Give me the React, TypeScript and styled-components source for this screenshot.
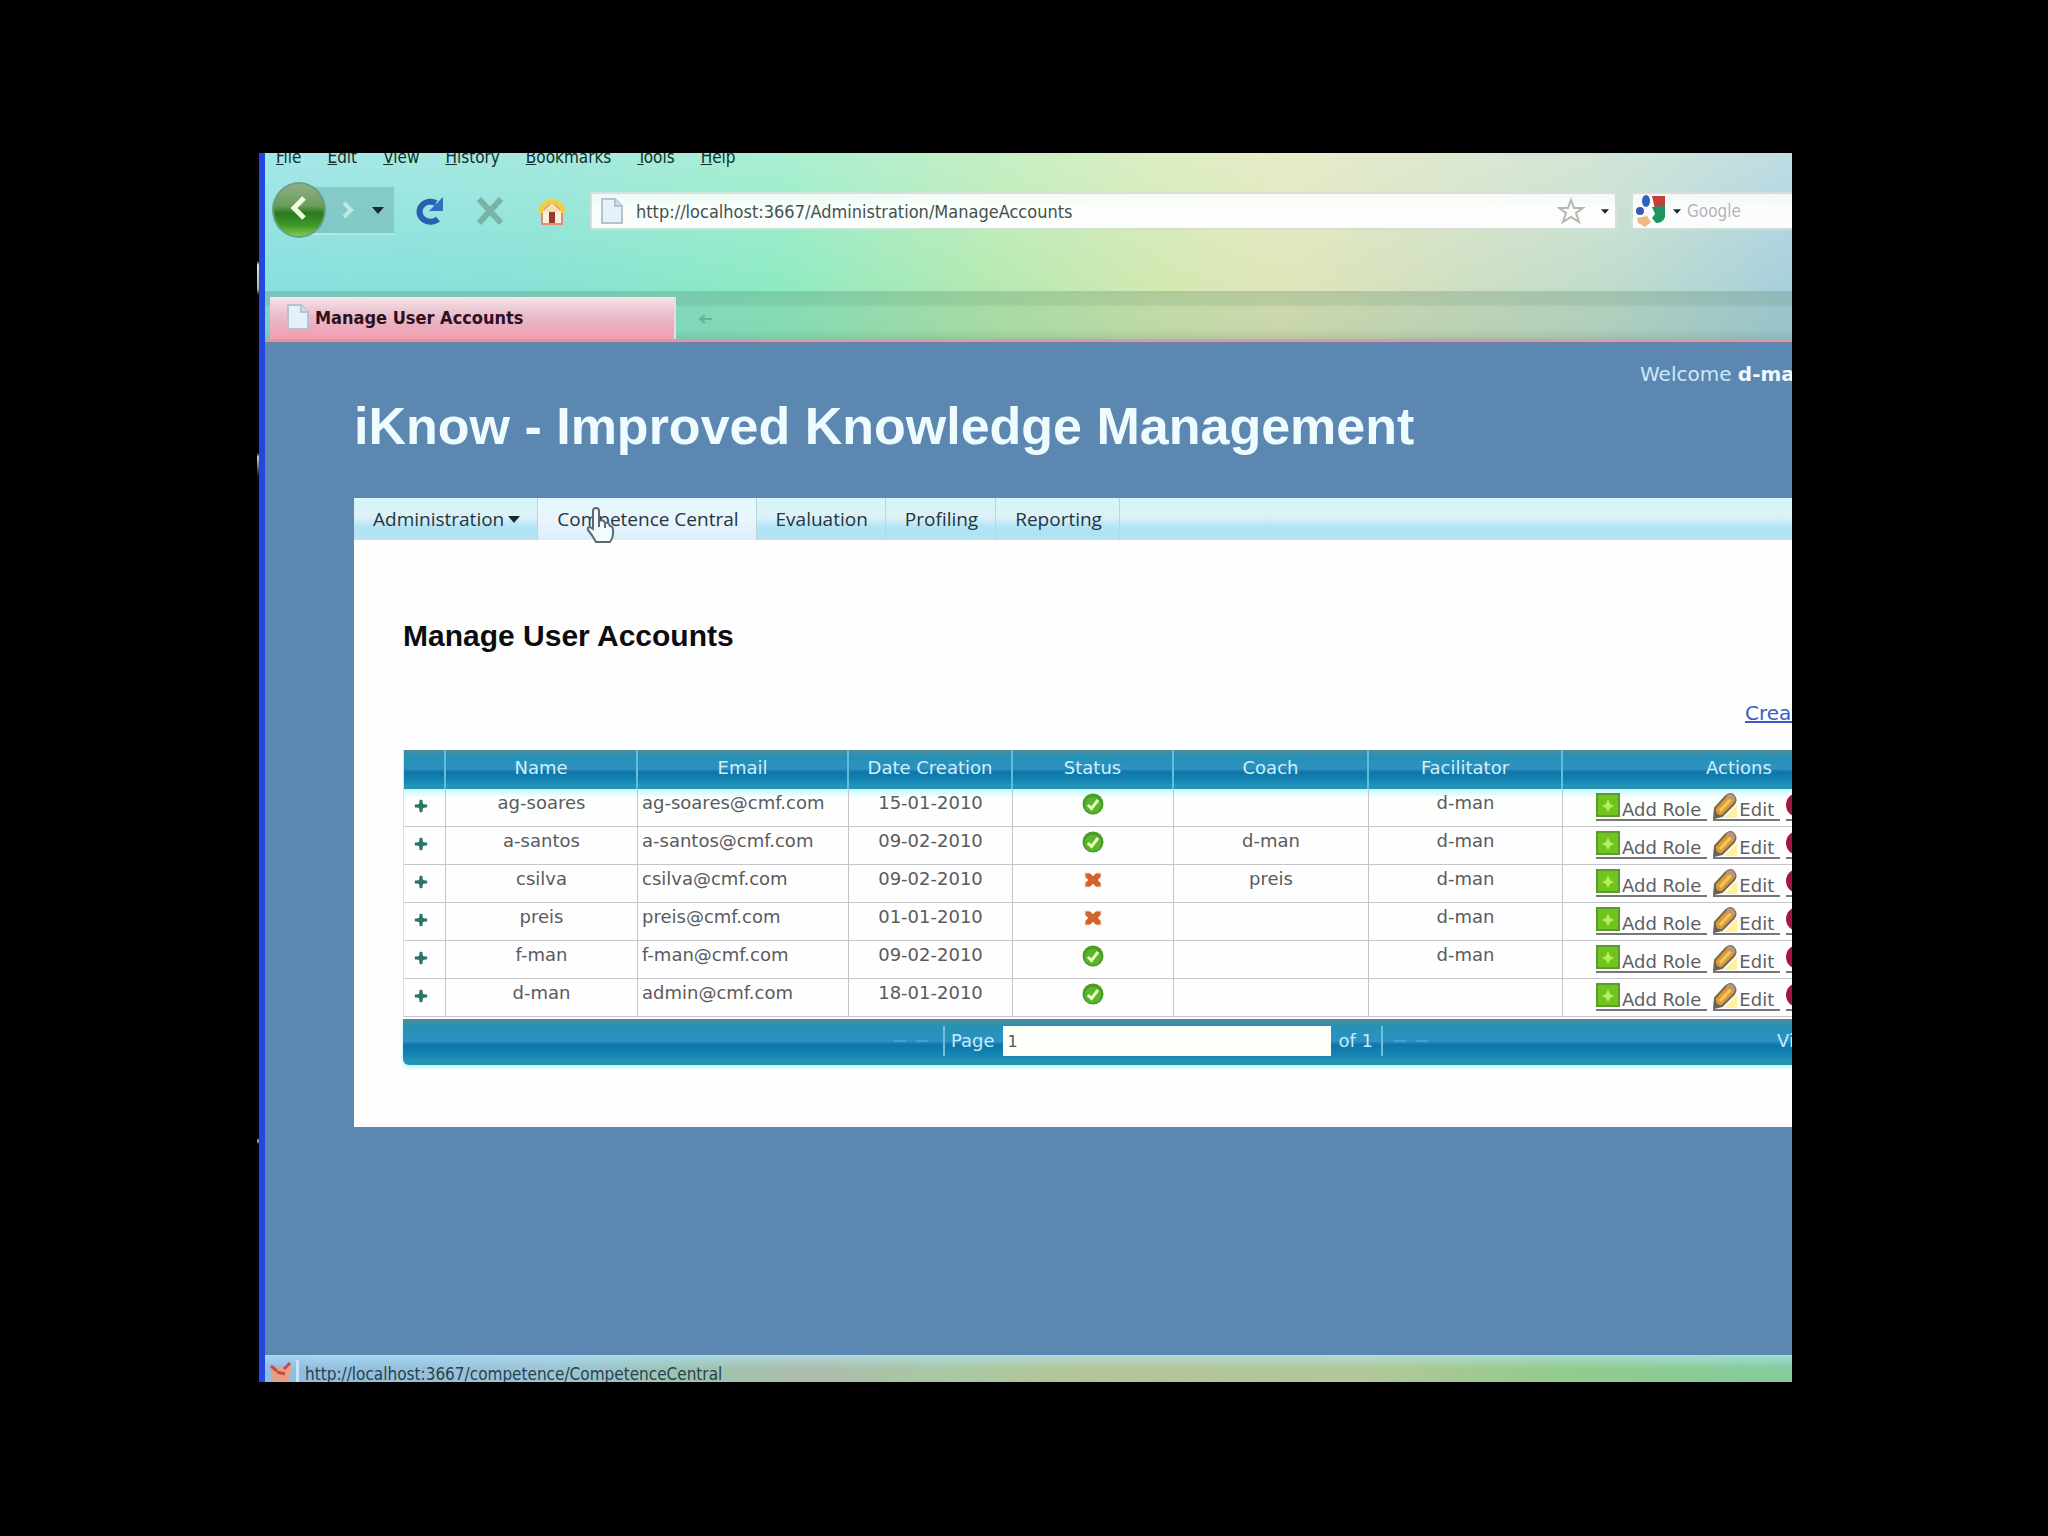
import React from 'react';
import styled, { createGlobalStyle, css } from 'styled-components';

const ui = `"DejaVu Sans Condensed", "DejaVu Sans", sans-serif`;
const verdana = `"DejaVu Sans", sans-serif`;
const arial = `"Liberation Sans", Arial, sans-serif`;
const nav = `"Open Sans", "Noto Sans", sans-serif`;

const blueBar = css`
  background: linear-gradient(
    #54899a 0,
    #2492b4 16%,
    #3090c2 48%,
    #0d76aa 56%,
    #1482b2 76%,
    #2296b8 92%,
    #2a8fae 100%
  );
`;

const GlobalStyle = createGlobalStyle`
  *, *::before, *::after { box-sizing: border-box; }
  body { margin: 0; background: #000; }
  button, input { font: inherit; color: inherit; }
  button { border: 0; padding: 0; background: none; cursor: pointer; }
`;

const Stage = styled.div`
  display: flex;
  min-height: 100vh;
  padding: 153px 256px 154px 257px;
  background: #000;
`;

const Viewport = styled.div`
  display: flex;
  flex: 1;
  min-width: 0;
  overflow: hidden;
`;

const DesktopSliver = styled.div`
  flex: 0 0 2px;
  background: linear-gradient(
    #05030c 108px,
    #d8e8e0 112px,
    #a8b8b0 136px,
    #05030c 142px,
    #05030c 300px,
    #c8d8d0 304px,
    #05030c 324px,
    #05030c 985px,
    #b0c0c0 988px,
    #05030c 991px
  );
`;

const BrowserWindow = styled.div`
  display: flex;
  flex-direction: column;
  flex: 0 0 calc(100% + 261px);
  border-left: 6px solid #2348e0;
  font-family: ${ui};
  font-size: 18px;
  color: #12302a;
`;

const Chrome = styled.header`
  background:
    linear-gradient(rgba(255, 255, 255, 0.26), rgba(255, 255, 255, 0) 75%),
    linear-gradient(
      96deg,
      #86dfe0 0,
      #86e2d4 16%,
      #8ceac2 29%,
      #b6e9b0 41%,
      #d2e8b0 50%,
      #dfe5b8 57%,
      #d2e0c0 65%,
      #c0dccc 75%,
      #a6cfdc 85%,
      #a0c8dc 100%
    );
`;

const MenuBar = styled.nav`
  display: flex;
  gap: 26px;
  height: 38px;
  padding-left: 11px;
  overflow: hidden;
  font-size: 17px;
`;

const MenuItem = styled.button`
  height: 24px;
  margin-top: -8px;
  line-height: 24px;

  &::first-letter {
    text-decoration: underline;
  }
`;

const Toolbar = styled.div`
  display: flex;
  align-items: center;
  height: 40px;
`;

const HistoryButtons = styled.div`
  display: flex;
  align-items: center;
  height: 48px;
  margin: 0 20px 0 34px;
  padding-right: 8px;
  background: rgba(90, 150, 150, 0.34);
  border-bottom: 2px solid rgba(210, 255, 245, 0.6);
`;

const BackButton = styled.button`
  flex: none;
  width: 54px;
  height: 56px;
  margin-left: -27px;
  border-radius: 50%;
  background: linear-gradient(#8fb088 0, #6a9c5c 42%, #2a7a1e 56%, #3f9a2a 80%, #7ccc50 100%);
  border: 2px solid #6aa080;
`;

const IconButton = styled.button<{ $w: number }>`
  display: grid;
  place-items: center;
  flex: none;
  width: ${(p) => p.$w}px;
  height: 36px;
`;

const AddressField = styled.div`
  display: flex;
  align-items: center;
  gap: 12px;
  flex: 1;
  height: 38px;
  margin-left: 22px;
  padding: 0 2px 0 8px;
  background: linear-gradient(rgba(255, 255, 255, 0.8), rgba(255, 255, 255, 0.94) 40%);
  border: 2px solid rgba(130, 160, 140, 0.3);
`;

const SearchField = styled(AddressField)`
  gap: 6px;
  flex: 0 0 424px;
  margin-left: 14px;
  padding: 0 4px 0 2px;
`;

const FieldInput = styled.input<{ $soft?: boolean }>`
  flex: 1;
  min-width: 0;
  border: 0;
  padding: 0;
  outline: 0;
  background: none;
  font-size: ${(p) => (p.$soft ? '17px' : '18px')};
  color: #43524c;

  &::placeholder {
    color: #b4b4bc;
    opacity: 1;
  }
`;

const TabStrip = styled.div`
  display: flex;
  height: 51px;
  margin-top: 60px;
  padding: 6px 0 0 5px;
  border-bottom: 3px solid #d99aa8;
  background: linear-gradient(rgba(70, 120, 90, 0.26) 0, rgba(70, 120, 90, 0.24) 14px, rgba(70, 120, 90, 0.12) 16px, rgba(70, 120, 90, 0.14) 80%, rgba(70, 120, 90, 0.28) 100%);
`;

const Tab = styled.button`
  display: flex;
  align-items: center;
  gap: 5px;
  width: 406px;
  padding: 0 0 2px 16px;
  border-right: 2px solid #f4d8de;
  background: linear-gradient(#f6e6ea 0, #ecc8d2 30%, #eab0c0 65%, #f59cb0 100%);
  font-weight: bold;
  color: #2c0f20;
`;

const NewTab = styled.button`
  width: 60px;
  color: #6fae92;
`;

const Page = styled.main`
  flex: 1;
  padding: 0 89px;
  background: #5b87b0;
  border-top: 2px solid #6f7fa8;
`;

const Banner = styled.div`
  display: flex;
  flex-direction: column;
  padding-top: 16px;
`;

const Welcome = styled.p`
  width: 326px;
  margin: 0;
  align-self: flex-end;
  font: 20px/28px ${verdana};
  color: #cfe8f8;

  b {
    color: #eef9ff;
  }
`;

const SiteTitle = styled.h1`
  margin: 8px 0 42px;
  font: bold 52px/60px ${arial};
  color: #effcff;
`;

const Panel = styled.section`
  background: #fefefe;
`;

const SiteMenu = styled.nav`
  display: flex;
  height: 42px;
  background: linear-gradient(#d4f6fa 0, #def1f6 45%, #b4e4f6 68%, #aee2f4 88%, #c4e2ea 100%);
  font: 19px/40px ${nav};
  color: #22363e;
`;

const SiteLink = styled.a<{ $hover?: boolean }>`
  display: flex;
  align-items: center;
  gap: 4px;
  padding: 0 17px 0 19px;
  border-right: 1px solid #b8d6e2;
  color: inherit;
  text-decoration: none;
  background: ${(p) => (p.$hover ? 'linear-gradient(#e0fafe, #ebf4fb 50%, #d9effb)' : 'none')};
`;

const Content = styled.div`
  padding: 76px 49px 62px;
`;

const Heading = styled.h2`
  margin: 0;
  font: bold 30px/40px ${arial};
  color: #0c0c10;
`;

const CreateRow = styled.div`
  display: flex;
  justify-content: flex-end;
  padding: 43px 0 23px;
`;

const CreateLink = styled.a`
  width: 172px;
  font: 20px/28px ${verdana};
  color: #3a5cc8;
`;

const Grid = styled.table`
  width: 100%;
  table-layout: fixed;
  border-collapse: separate;
  border-spacing: 0;
  border-left: 1px solid #dcdce4;
  font: 18px/28px ${verdana};
  color: #5a5a5e;
`;

const Th = styled.th`
  ${blueBar}
  height: 39px;
  padding: 0 0 3px;
  border-right: 2px solid #62bcdc;
  font-weight: normal;
  color: #cdf1fb;
`;

const Td = styled.td<{ $align?: 'left' }>`
  height: 38px;
  padding: ${(p) => (p.$align ? '0 0 0 4px' : '0')};
  vertical-align: top;
  text-align: ${(p) => p.$align ?? 'center'};
  border-right: 1px solid #c4c4ca;
  border-bottom: 1px solid #c4c6ca;
  white-space: nowrap;

  tr:first-child > & {
    background: linear-gradient(#c4f8fc, #fdfffc 9px);
  }
`;

const Status = styled.div`
  display: grid;
  place-items: center;
  height: 30px;
`;

const Expander = styled.button`
  display: grid;
  place-items: center;
  width: 34px;
  height: 34px;
`;

const Actions = styled.div`
  display: flex;
  gap: 6px;
  padding: 4px 0 0 33px;
`;

const Action = styled.a`
  display: flex;
  align-items: flex-end;
  gap: 2px;
  height: 28px;
  padding-right: 6px;
  border-bottom: 2px solid #77777b;
  line-height: 18px;
  color: #606064;
  text-decoration: none;

  svg {
    align-self: flex-start;
  }
`;

const Pager = styled.div`
  ${blueBar}
  display: grid;
  grid-template-columns: 1fr auto 1fr;
  align-items: center;
  height: 46px;
  margin-top: 2px;
  padding-bottom: 2px;
  border-bottom-left-radius: 6px;
  box-shadow: 0 2px 4px #a8f4f8;
  font: 18px/26px ${verdana};
  color: #c4ecf8;
`;

const PagerCentre = styled.div`
  grid-column: 2;
  display: flex;
  align-items: center;
  gap: 8px;
  padding-left: 6px;
`;

const PagerGroup = styled.div<{ $side: 'left' | 'right' }>`
  display: flex;
  align-items: center;
  gap: 8px;
  width: 52px;
  height: 30px;
  padding-left: ${(p) => (p.$side === 'right' ? '10px' : '0')};
  border: 0 solid #6cc0dc;
  border-width: ${(p) => (p.$side === 'left' ? '0 2px 0 0' : '0 0 0 2px')};
`;

const PagerStep = styled.button`
  display: grid;
  place-items: center;
  width: 14px;
  height: 14px;
  color: #4ba0cc;
`;

const PageLabel = styled.label`
  display: flex;
  align-items: center;
  gap: 8px;
  margin-left: -2px;
`;

const PageInput = styled.input`
  width: 328px;
  height: 30px;
  padding: 0 5px;
  border: 0;
  background: #fffffa;
  font-size: 16px;
  color: #555;
`;

const PagerInfo = styled.span`
  justify-self: end;
  width: 140px;
`;

const StatusBar = styled.footer`
  display: flex;
  height: 27px;
  padding: 5px 0 0 4px;
  overflow: hidden;
  line-height: 28px;
  font-size: 17px;
  color: #27424c;
  background:
    linear-gradient(rgba(180, 230, 255, 0.6), rgba(255, 255, 255, 0) 50%),
    linear-gradient(90deg, #90bce4 0, #9cc4d4 16%, #9cc4b0 24%, #acbcac 30%, #a8c8a4 38%, #b4c498 46%, #b0c898 62%, #94ca8c 72%, #84cc9c 84%, #84cca8 100%);
`;

const StatusIcon = styled.div`
  width: 30px;
  margin-right: 6px;
  border-right: 3px solid #c6e6f6;
`;

const PointerHost = styled.span`
  position: relative;
`;

const Pointer = styled.svg`
  position: absolute;
  left: 28px;
  top: 8px;
`;

const DocIcon = () => (
  <svg width="24" height="28" viewBox="0 0 24 28" aria-hidden="true">
    <path d="M2 2h13l7 7v17H2z" fill="#e6f0f8" stroke="#b4c2d4" strokeWidth="2" />
    <path d="M15 2v7h7" fill="#cfdcec" stroke="#b4c2d4" strokeWidth="2" />
  </svg>
);

const Caret = ({ w = 12, color = '#142c34' }: { w?: number; color?: string }) => (
  <svg width={w} height={w / 2 + 1} viewBox="0 0 12 7" aria-hidden="true">
    <path d="M0 0h12L6 7z" fill={color} />
  </svg>
);

const CheckIcon = () => (
  <svg width="22" height="22" viewBox="0 0 22 22" role="img" aria-label="Active">
    <circle cx="11" cy="11" r="10.5" fill="#4a9e28" />
    <circle cx="11" cy="12" r="8" fill="#5cb430" />
    <path d="M6 12l3.500 3.500 6.500-8.500" fill="none" stroke="#e4ffb8" strokeWidth="3" />
  </svg>
);

const CrossIcon = () => (
  <svg width="22" height="22" viewBox="0 0 22 22" role="img" aria-label="Inactive">
    <path d="M3 4h5l3 3 3-3h5v4l-3 3 3 3v4h-5l-3-3-3 3H3v-4l3-3-3-3z" fill="#d4622f" stroke="#fbd8bc" />
  </svg>
);

const PlusIcon = () => (
  <svg width="16" height="16" viewBox="0 0 16 16" aria-hidden="true">
    <path d="M8 1l2 5 5 2-5 2-2 5-2-5-5-2 5-2z" fill="#2b7468" />
    <path d="M6.500 2h3v4.500H14v3H9.500V14h-3V9.500H2v-3h4.500z" fill="#2b7468" />
  </svg>
);

const AddIcon = () => (
  <svg width="24" height="24" viewBox="0 0 24 24" aria-hidden="true">
    <rect width="24" height="24" fill="#5a9a34" />
    <rect x="2" y="2" width="20" height="20" fill="#70c41c" />
    <path d="M12 6l2 5 4 2-4 2-2 4-2-4-4-2 4-2z" fill="#b4ee64" />
  </svg>
);

const PencilIcon = () => (
  <svg width="24" height="26" viewBox="0 0 24 26" aria-hidden="true">
    <path d="M24 12v13H11z" fill="#fff0a0" />
    <path d="M1 25l1-10L13 3q5-4 8 0t0 8L9 23z" fill="#dc9c34" stroke="#7c6850" strokeWidth="2" />
    <path d="M7 18L18 6" stroke="#f4c460" strokeWidth="3" />
    <path d="M13 3q5-4 8 0 2 3 1 5l-4-1z" fill="#b49880" />
    <path d="M1 25l1-10 2 6 5 2z" fill="#5c6468" />
  </svg>
);

const DeleteIcon = () => (
  <svg width="24" height="24" viewBox="0 0 24 24" aria-hidden="true">
    <circle cx="12" cy="12" r="12" fill="#a01840" />
    <path d="M8 8l8 8M16 8l-8 8" stroke="#fff" strokeWidth="3" />
  </svg>
);

const ReloadIcon = () => (
  <svg width="30" height="30" viewBox="0 0 30 30" aria-hidden="true">
    <path d="M24 23a11 10 0 1 1-2-16" fill="none" stroke="#2860b0" strokeWidth="6" />
    <path d="M29 1v14H15z" fill="#2c70c0" />
  </svg>
);

const StopIcon = () => (
  <svg width="30" height="30" viewBox="0 0 30 30" aria-hidden="true">
    <path d="M4 3l22 24M26 3L4 27" stroke="#79b3a8" strokeWidth="6" />
  </svg>
);

const HomeIcon = () => (
  <svg width="28" height="28" viewBox="0 0 28 28" aria-hidden="true">
    <path d="M4 14v13h20V14l-10-9z" fill="#fbeedd" stroke="#e08c78" strokeWidth="2" />
    <path d="M2 16Q4 6 14 4q10 2 12 12" fill="none" stroke="#f0d040" strokeWidth="5" />
    <path d="M6 15l8-8 8 8z" fill="#f4e0b0" />
    <rect x="11" y="15" width="6" height="11" fill="#98382c" />
  </svg>
);

const StarIcon = () => (
  <svg width="28" height="28" viewBox="0 0 28 28" aria-hidden="true">
    <path d="M14 3l3 8h9l-7 5 3 9-8-5-8 5 3-9-7-5h9z" fill="none" stroke="#b2b8ae" strokeWidth="2" />
  </svg>
);

const GoogleIcon = () => (
  <svg width="32" height="34" viewBox="0 0 32 34" aria-hidden="true">
    <path d="M17 2h13v13H20z" fill="#c04040" />
    <path d="M17 13l13-1v11q-2 6-9 6l-4-5 3-4z" fill="#1e9460" />
    <path d="M2 24l10-2 4 6-6 5-7-4z" fill="#f0b880" />
    <ellipse cx="11" cy="7" rx="4" ry="6" fill="#2c62c0" />
    <circle cx="5" cy="17" r="4" fill="#3a58b0" />
  </svg>
);

const DashIcon = () => (
  <svg width="12" height="4" viewBox="0 0 12 4" aria-hidden="true">
    <path d="M0 2h12" stroke="currentColor" strokeWidth="2" />
  </svg>
);

type Account = { name: string; email: string; date: string; active: boolean; coach: string; facilitator: string };

const accounts: Account[] = [
  { name: 'ag-soares', email: 'ag-soares@cmf.com', date: '15-01-2010', active: true, coach: '', facilitator: 'd-man' },
  { name: 'a-santos', email: 'a-santos@cmf.com', date: '09-02-2010', active: true, coach: 'd-man', facilitator: 'd-man' },
  { name: 'csilva', email: 'csilva@cmf.com', date: '09-02-2010', active: false, coach: 'preis', facilitator: 'd-man' },
  { name: 'preis', email: 'preis@cmf.com', date: '01-01-2010', active: false, coach: '', facilitator: 'd-man' },
  { name: 'f-man', email: 'f-man@cmf.com', date: '09-02-2010', active: true, coach: '', facilitator: 'd-man' },
  { name: 'd-man', email: 'admin@cmf.com', date: '18-01-2010', active: true, coach: '', facilitator: '' },
];

const columns = [
  { label: '', width: 42 },
  { label: 'Name', width: 192 },
  { label: 'Email', width: 211 },
  { label: 'Date Creation', width: 164 },
  { label: 'Status', width: 161 },
  { label: 'Coach', width: 195 },
  { label: 'Facilitator', width: 194 },
  { label: 'Actions' },
];

const menus = ['File', 'Edit', 'View', 'History', 'Bookmarks', 'Tools', 'Help'];

const AccountRow = ({ account }: { account: Account }) => (
  <tr>
    <Td>
      <Expander aria-label={`Expand ${account.name}`}><PlusIcon /></Expander>
    </Td>
    <Td>{account.name}</Td>
    <Td $align="left">{account.email}</Td>
    <Td>{account.date}</Td>
    <Td><Status>{account.active ? <CheckIcon /> : <CrossIcon />}</Status></Td>
    <Td>{account.coach}</Td>
    <Td>{account.facilitator}</Td>
    <Td>
      <Actions>
        <Action href="#add-role"><AddIcon />Add Role</Action>
        <Action href="#edit"><PencilIcon />Edit</Action>
        <Action href="#delete" aria-label="Delete"><DeleteIcon /></Action>
      </Actions>
    </Td>
  </tr>
);

export default function App() {
  return (
    <Stage>
      <GlobalStyle />
      <Viewport>
        <DesktopSliver />
        <BrowserWindow>
          <Chrome>
            <MenuBar>
              {menus.map((m) => <MenuItem key={m}>{m}</MenuItem>)}
            </MenuBar>
            <Toolbar>
              <HistoryButtons>
                <BackButton aria-label="Back">
                  <svg width="24" height="28" viewBox="0 0 24 28"><path d="M17 4L7 14l10 10" fill="none" stroke="#f0ffe0" strokeWidth="5" /></svg>
                </BackButton>
                <IconButton $w={44} aria-label="Forward">
                  <svg width="14" height="18" viewBox="0 0 14 18"><path d="M3 2l7 7-7 7" fill="none" stroke="#bfe8e2" strokeWidth="4" /></svg>
                </IconButton>
                <IconButton $w={16} aria-label="Recent pages"><Caret /></IconButton>
              </HistoryButtons>
              <IconButton $w={30} aria-label="Reload"><ReloadIcon /></IconButton>
              <IconButton $w={92} aria-label="Stop"><StopIcon /></IconButton>
              <IconButton $w={32} aria-label="Home"><HomeIcon /></IconButton>
              <AddressField>
                <DocIcon />
                <FieldInput aria-label="Address" defaultValue="http://localhost:3667/Administration/ManageAccounts" />
                <StarIcon />
                <IconButton $w={16} aria-label="Address history"><Caret w={8} /></IconButton>
              </AddressField>
              <SearchField>
                <GoogleIcon />
                <Caret w={8} />
                <FieldInput $soft aria-label="Search" placeholder="Google" />
              </SearchField>
            </Toolbar>
            <TabStrip>
              <Tab><DocIcon />Manage User Accounts</Tab>
              <NewTab aria-label="New tab">
                <svg width="16" height="12" viewBox="0 0 16 12"><path d="M2 6h12M7 2L2 6l5 4" fill="none" stroke="currentColor" strokeWidth="2" /></svg>
              </NewTab>
            </TabStrip>
          </Chrome>
          <Page>
            <Banner>
              <Welcome>Welcome <b>d-man</b></Welcome>
              <SiteTitle>iKnow - Improved Knowledge Management</SiteTitle>
            </Banner>
            <Panel>
              <SiteMenu>
                <SiteLink href="#administration">Administration <Caret w={12} /></SiteLink>
                <SiteLink href="#competence" $hover>
                  <PointerHost>
                    Competence Central
                    <Pointer width="30" height="38" viewBox="0 0 30 38" aria-hidden="true">
                      <path d="M8 22V4q0-3 3-3t3 3v10q5-2 6 2 4-1 5 3 3 0 3 4v4q0 4-3 8H11q-3-6-8-12-1-3 2-3z" fill="#f4fbff" stroke="#5c6a72" strokeWidth="2" />
                      <path d="M14 14v6M20 17v4" stroke="#5c6a72" strokeWidth="2" />
                    </Pointer>
                  </PointerHost>
                </SiteLink>
                <SiteLink href="#evaluation">Evaluation</SiteLink>
                <SiteLink href="#profiling">Profiling</SiteLink>
                <SiteLink href="#reporting">Reporting</SiteLink>
              </SiteMenu>
              <Content>
                <Heading>Manage User Accounts</Heading>
                <CreateRow>
                  <CreateLink href="#create">Create Account</CreateLink>
                </CreateRow>
                <Grid>
                  <colgroup>
                    {columns.map((c) => <col key={c.label} width={c.width} />)}
                  </colgroup>
                  <thead>
                    <tr>{columns.map((c) => <Th key={c.label} scope="col">{c.label}</Th>)}</tr>
                  </thead>
                  <tbody>
                    {accounts.map((a) => <AccountRow key={a.name} account={a} />)}
                  </tbody>
                </Grid>
                <Pager>
                  <PagerCentre>
                    <PagerGroup $side="left">
                      <PagerStep aria-label="First page"><DashIcon /></PagerStep>
                      <PagerStep aria-label="Previous page"><DashIcon /></PagerStep>
                    </PagerGroup>
                    <PageLabel>Page <PageInput defaultValue="1" /></PageLabel>
                    <span>of 1</span>
                    <PagerGroup $side="right">
                      <PagerStep aria-label="Next page"><DashIcon /></PagerStep>
                      <PagerStep aria-label="Last page"><DashIcon /></PagerStep>
                    </PagerGroup>
                  </PagerCentre>
                  <PagerInfo>View 1 - 6 of 6</PagerInfo>
                </Pager>
              </Content>
            </Panel>
          </Page>
          <StatusBar>
            <StatusIcon>
              <svg width="24" height="22" viewBox="0 0 24 22" aria-hidden="true">
                <path d="M1 5l6 3 4-3 4 4 6-7 1 8-3 12H4z" fill="#e8a080" />
                <path d="M2 6l6 5M15 9l6-6M8 12l8 2" stroke="#c4484c" strokeWidth="3" />
              </svg>
            </StatusIcon>
            http://localhost:3667/competence/CompetenceCentral
          </StatusBar>
        </BrowserWindow>
      </Viewport>
    </Stage>
  );
}
